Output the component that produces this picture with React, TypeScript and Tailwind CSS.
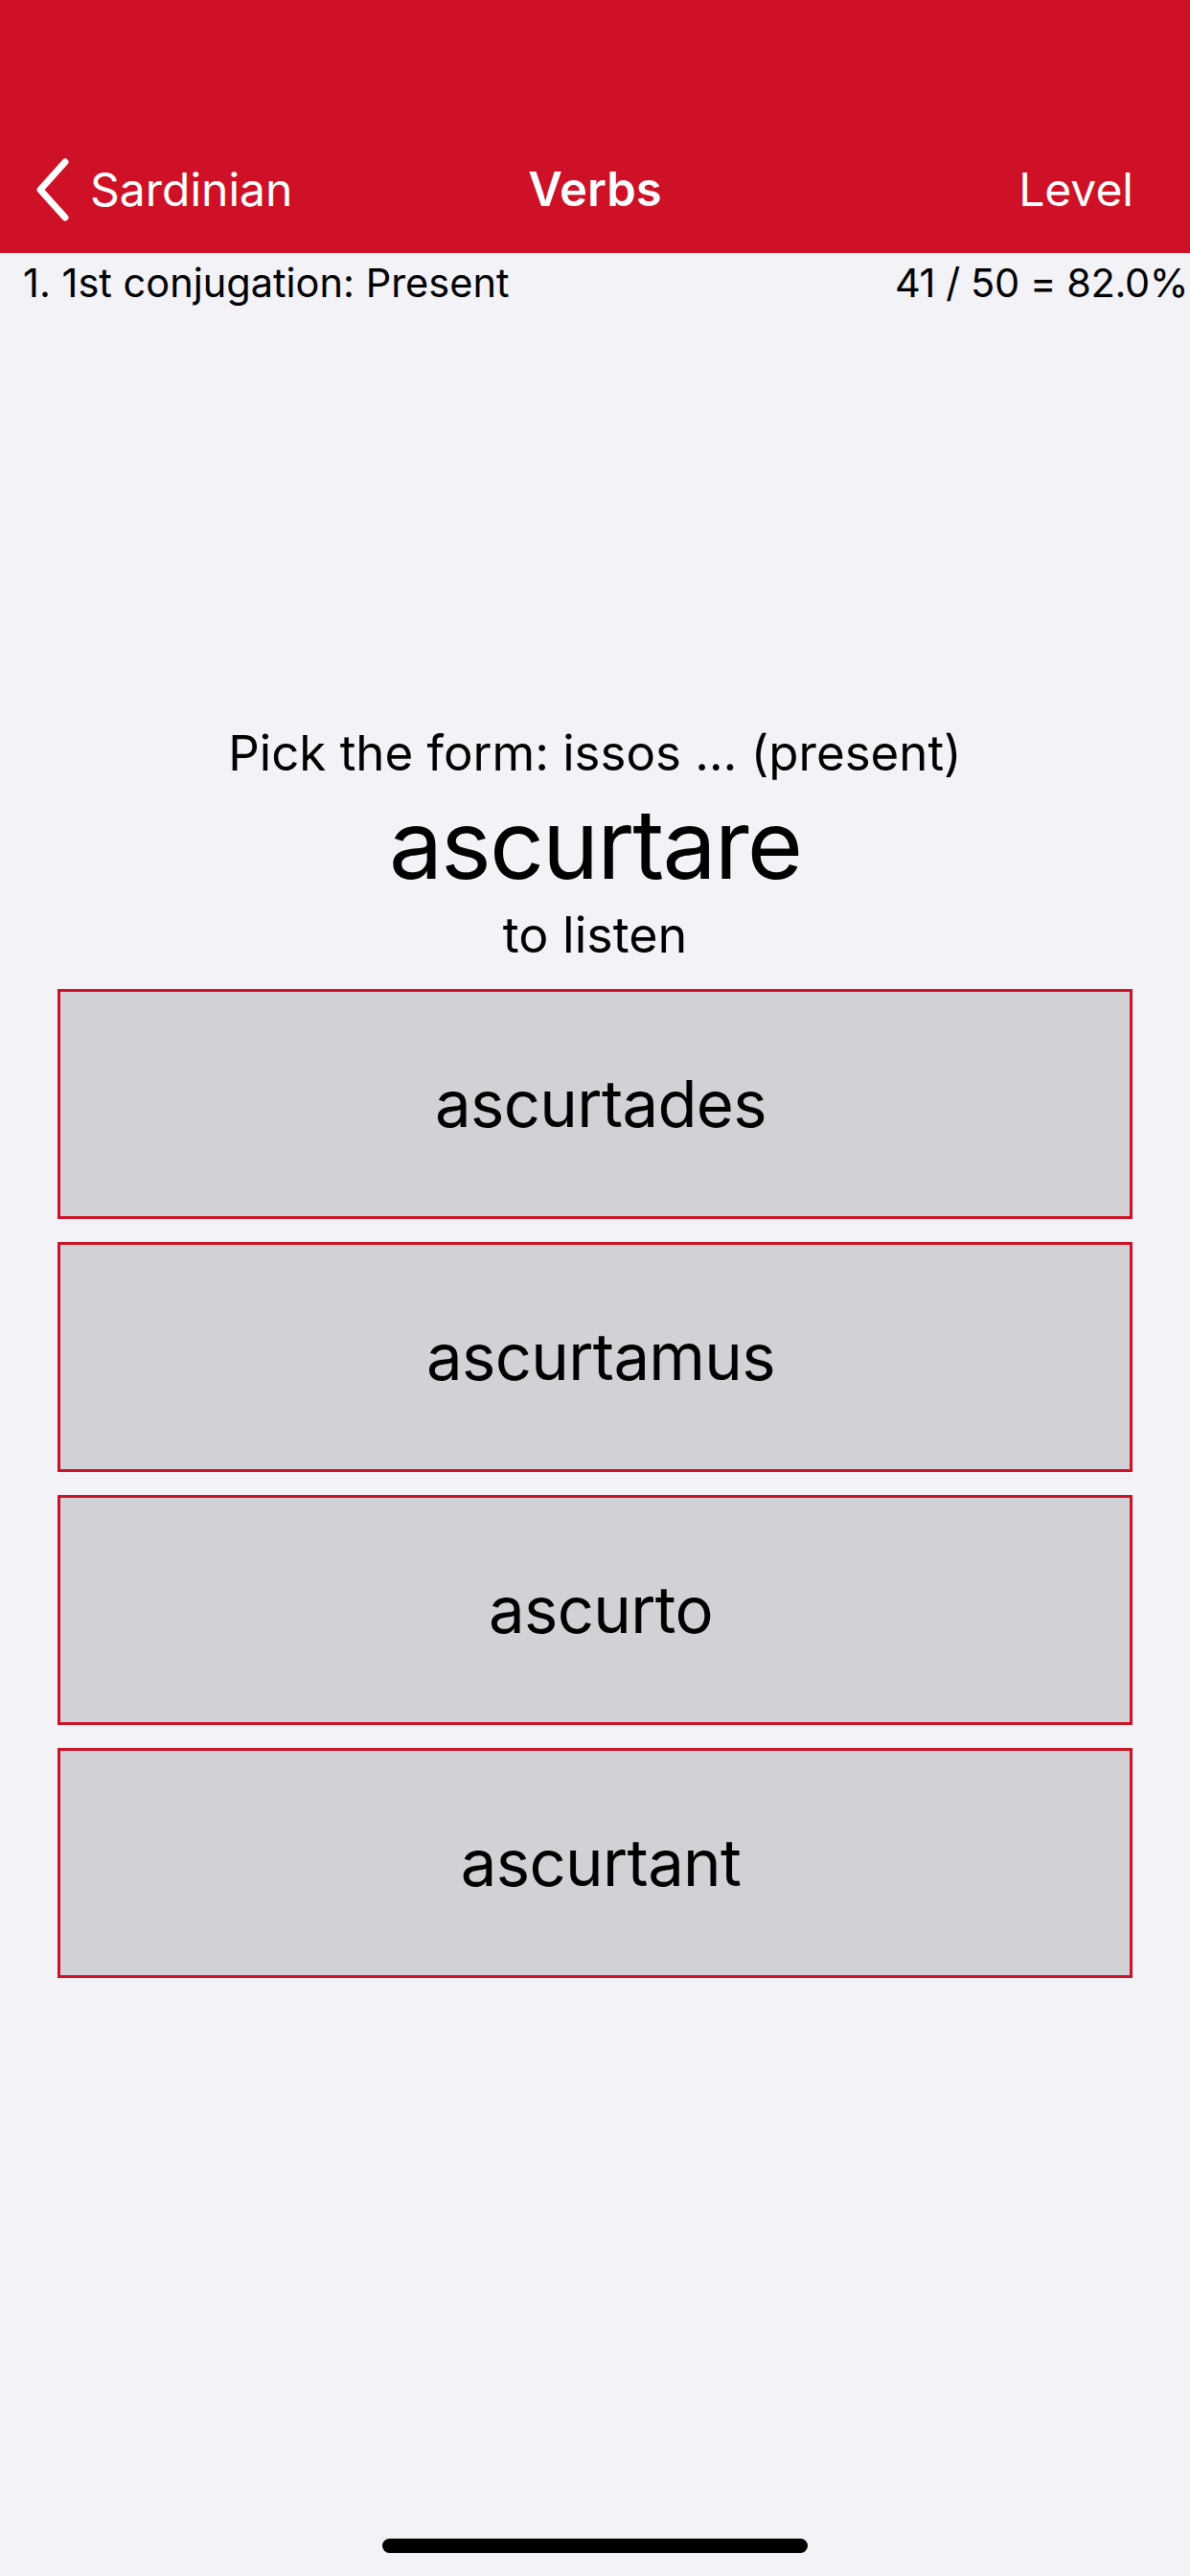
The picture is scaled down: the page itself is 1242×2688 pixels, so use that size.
import React from "react";

const choices = ["ascurtades", "ascurtamus", "ascurto", "ascurtant"];

function BackChevron() {
  return (
    <svg width="44" height="70" viewBox="0 0 44 70" className="shrink-0">
      <polyline
        points="34,6 8,35 34,64"
        fill="none"
        stroke="white"
        strokeWidth="7"
        strokeLinecap="round"
        strokeLinejoin="round"
      />
    </svg>
  );
}

export default function App() {
  return (
    <div
      className="relative w-[1242px] h-[2688px] bg-[#f2f2f7] text-black flex flex-col overflow-hidden"
      style={{ fontFamily: "Inter, 'Noto Sans', sans-serif" }}
    >
      {/* Navigation bar */}
      <div className="h-[264px] bg-[#ce1126] shrink-0 flex flex-col">
        <div className="h-[132px]" />
        <div className="relative h-[132px] flex items-center text-white text-[48px]">
          <div className="flex items-center pl-[34px] gap-[16px]">
            <BackChevron />
            <span>Sardinian</span>
          </div>
          <span className="absolute left-1/2 -translate-x-1/2 font-semibold text-[49px]">Verbs</span>
          <span className="ml-auto pr-[59px]">Level</span>
        </div>
      </div>

      {/* Level / score line */}
      <div className="h-[62px] flex items-center justify-between pl-[24px] pr-[2px] text-[41.5px]">
        <span>1. 1st conjugation: Present</span>
        <span className="tracking-[-0.01em]">41 / 50 = 82.0%</span>
      </div>

      {/* Question */}
      <div className="flex flex-col items-center pt-[429px]">
        <p className="text-[51px] leading-[62px]">Pick the form: issos … (present)</p>
        <p className="text-[100px] leading-[120px] tracking-[-0.02em] mt-[4px]">ascurtare</p>
        <p className="text-[52px] leading-[62px] mt-[4px]">to listen</p>
      </div>

      {/* Answer buttons */}
      <div className="flex flex-col gap-[24px] px-[60px] mt-[25px]">
        {choices.map((c) => (
          <button
            key={c}
            className="h-[240px] w-full bg-[#d1d1d6] border-[3px] border-[#ce1126] flex items-center justify-center pl-[12px] text-[67px] tracking-[-0.01em]"
          >
            {c}
          </button>
        ))}
      </div>

      {/* Home indicator */}
      <div className="absolute bottom-[24px] left-1/2 -translate-x-1/2 w-[444px] h-[15px] rounded-full bg-black" />
    </div>
  );
}
